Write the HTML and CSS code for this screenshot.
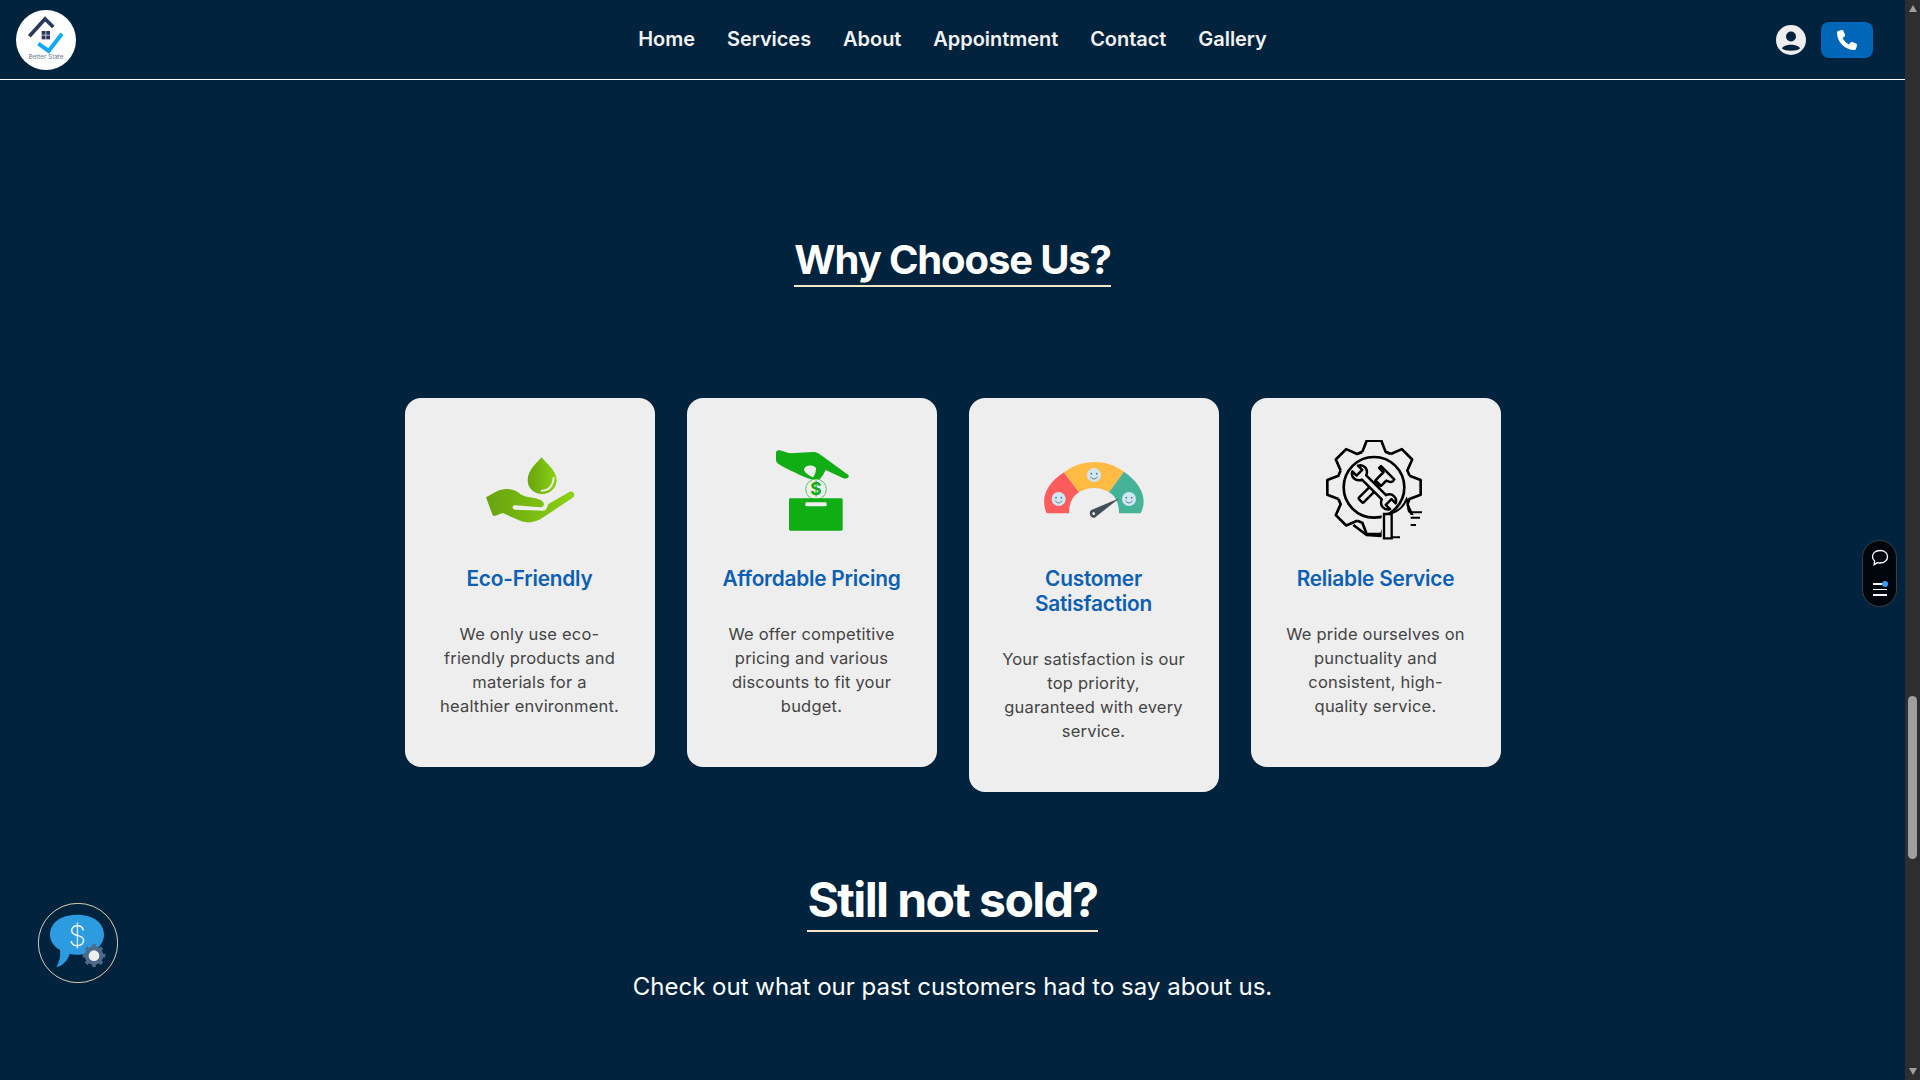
FILE: index.html
```html
<!DOCTYPE html>
<html lang="en">
<head>
<meta charset="utf-8">
<title>Better State</title>
<link rel="stylesheet" href="styles.css">
</head>
<body>
<div class="app">
  <div class="page">
    <header class="topbar">
      <a class="logo">
        <svg viewBox="48 29 180 180" width="60" height="60">
          <circle cx="138" cy="119" r="90" fill="#fff"/>
          <path d="M88 108 L135 56 L160 80" fill="none" stroke="#2a3a5c" stroke-width="11"/>
          <rect x="125" y="92" width="25" height="25" fill="#2a3a5c"/>
          <path d="M137.5 92V117M125 104.500H150" stroke="#fff" stroke-width="2"/>
          <path d="M115 130 L146 152 L186 100" fill="none" stroke="#12aaf2" stroke-width="12"/>
          <text x="138" y="176" text-anchor="middle" class="logo-text">Better State</text>
        </svg>
      </a>
      <nav class="nav">
        <a>Home</a><a>Services</a><a>About</a><a>Appointment</a><a>Contact</a><a>Gallery</a>
      </nav>
      <div class="actions">
        <svg viewBox="0 0 30 30" width="30" height="30">
          <circle cx="15" cy="15" r="15" fill="#eee"/>
          <circle cx="15" cy="11.500" r="5" fill="#01233e"/>
          <path d="M6 23.500 C8 18.500 22 18.500 24 23.500 C21 26.500 9 26.500 6 23.500Z" fill="#01233e"/>
        </svg>
        <button class="call">
          <svg viewBox="0 0 512 512" width="20" height="20"><path fill="#fff" d="M164.900 24.600c-7.700-18.600-28-28.500-47.400-23.200l-88 24C12.100 30.200 0 46 0 64C0 311.400 200.600 512 448 512c18 0 33.800-12.100 38.600-29.500l24-88c5.300-19.400-4.600-39.700-23.200-47.400l-96-40c-16.300-6.800-35.200-2.100-46.300 11.600L304.700 368C234.300 334.700 177.300 277.700 144 207.300L193.300 167c13.700-11.200 18.400-30 11.600-46.300l-40-96z"/></svg>
        </button>
      </div>
    </header>

    <main class="content">
      <h2 class="heading why">Why Choose Us?</h2>
      <section class="cards">
        <article class="card">
          <svg class="card-icon" viewBox="60 30 300 300">
            <defs><linearGradient id="eco" x1="0" x2="1" y1="0" y2="0"><stop offset="0" stop-color="#68a30f"/><stop offset="1" stop-color="#8bd213"/></linearGradient></defs>
            <path d="M245 82 C258 100 290 122 290 150 C290 175 270 192 247 192 C222 192 203 175 203 150 C203 122 232 96 245 82Z" fill="url(#eco)"/>
            <path d="M245 182 C265 182 278 170 281 144" fill="none" stroke="#eee" stroke-width="6" stroke-linecap="round"/>
            <path d="M78 202 L108 185 C130 173 160 175 178 190 C192 203 225 203 240 209 C255 215 256 232 240 232 L165 226 C155 226 155 238 166 239 L250 242 C258 242 262 232 265 222 L328 186 C340 180 348 195 338 203 L250 262 C225 280 195 282 170 268 L130 250 C118 248 105 264 98 256 Z" fill="url(#eco)"/>
          </svg>
          <h3>Eco-Friendly</h3>
          <p>We only use eco-<br>friendly products and<br>materials for a<br>healthier environment.</p>
        </article>
        <article class="card">
          <svg class="card-icon" viewBox="906 30 300 300">
            <path d="M948 66 C955 55 965 65 990 70 L1060 66 C1072 66 1082 74 1095 84 L1165 135 C1170 143 1160 147 1150 145 L1097 120 C1090 135 1080 148 1078 148 L1060 148 C1045 150 1000 125 965 108 C955 102 948 98 948 90Z" fill="#11ad14"/>
            <path d="M1032 118 C1034 105 1062 102 1068 115 C1068 128 1062 142 1058 142 C1050 138 1032 128 1032 118Z" fill="#eee"/>
            <circle cx="1068" cy="178" r="31" fill="#eee" stroke="#11ad14" stroke-width="2"/>
            <text x="1068" y="196" text-anchor="middle" class="dollar">$</text>
            <rect x="987" y="205" width="161" height="97" rx="4" fill="#11ad14"/>
            <rect x="1036" y="217" width="64" height="12" rx="4" fill="#eee"/>
          </svg>
          <h3>Affordable Pricing</h3>
          <p>We offer competitive<br>pricing and various<br>discounts to fit your<br>budget.</p>
        </article>
        <article class="card">
          <svg class="card-icon" viewBox="72 30 300 300">
            <path d="M80 250 C60 205 80 160 132 127 L177 187 C155 200 147 225 147 250Z" fill="#fd5c5c"/>
            <path d="M132 127 C185 86 260 86 312 125 L267 187 C240 170 205 170 177 187Z" fill="#ffbb44"/>
            <path d="M312 125 C362 160 385 205 362 250 L297 250 C297 225 290 200 267 187Z" fill="#46b298"/>
            <g fill="#cfe6f5"><circle cx="116" cy="207" r="21"/><circle cx="222" cy="135" r="21"/><circle cx="327" cy="207" r="21"/></g>
            <g fill="#5a6b72"><circle cx="108" cy="203" r="2.500"/><circle cx="124" cy="203" r="2.500"/><circle cx="214" cy="131" r="2.500"/><circle cx="230" cy="131" r="2.500"/><circle cx="319" cy="203" r="2.500"/><circle cx="335" cy="203" r="2.500"/></g>
            <g fill="none" stroke="#5a6b72" stroke-width="2.500"><path d="M106 212 C110 221 122 221 126 212M212 140 C216 149 228 149 232 140M317 212 C321 221 333 221 337 212"/></g>
            <path d="M298 205 L214 240 C205 246 210 266 224 263 Z" fill="#434f57"/>
            <circle cx="221" cy="251" r="4" fill="#fff"/>
          </svg>
          <h3>Customer<br>Satisfaction</h3>
          <p>Your satisfaction is our<br>top priority,<br>guaranteed with every<br>service.</p>
        </article>
        <article class="card">
          <svg class="card-icon" viewBox="918 30 300 300">
            <defs>
              <g id="tooth"><path d="M-35 -106.400 L-22 -140 L22 -140 L35 -106.400 A112 112 0 0 1 50.500 -100" fill="none" stroke="#000" stroke-width="8" stroke-linejoin="round"/></g>
            </defs>
            <g transform="translate(1062 172)">
              <use href="#tooth"/><use href="#tooth" transform="rotate(45)"/><use href="#tooth" transform="rotate(90)"/><use href="#tooth" transform="rotate(135)"/><use href="#tooth" transform="rotate(180)"/><use href="#tooth" transform="rotate(225)"/><use href="#tooth" transform="rotate(270)"/><use href="#tooth" transform="rotate(315)"/>
              <circle r="91" fill="none" stroke="#000" stroke-width="8"/>
              <g fill="#eee" stroke="#000" stroke-width="7.500" stroke-linejoin="round">
                <g transform="rotate(45)">
                  <rect x="-10" y="-15" width="20" height="72" rx="3"/>
                  <path d="M-12 -18 L-12 -52 L-30 -52 L-30 -60 L26 -60 C30 -50 26 -45 12 -40 L12 -18Z"/>
                </g>
                <g transform="rotate(-45)">
                  <path d="M-9 -42 L-9 42 C-28 50 -28 72 -12 80 L-12 62 L12 62 L12 80 C28 72 28 50 9 42 L9 -42 C28 -50 28 -72 12 -80 L12 -62 L-12 -62 L-12 -80 C-28 -72 -28 -50 -9 -42Z"/>
                </g>
              </g>
            </g>
            <path d="M1085 255 L1215 255 L1215 332 L1085 332Z" fill="#eee"/>
            <path d="M1000 285 L1040 315 L1085 318" fill="none" stroke="#000" stroke-width="8"/>
            <path d="M1092 252 H1115 V325 H1092Z" fill="#eee" stroke="#000" stroke-width="7"/>
            <path d="M1115 250 C1140 240 1150 230 1160 207 C1168 225 1160 242 1170 247 H1206M1115 322 H1140M1172 263 H1200M1172 285 H1188" fill="none" stroke="#000" stroke-width="6"/>
          </svg>
          <h3>Reliable Service</h3>
          <p>We pride ourselves on<br>punctuality and<br>consistent, high-<br>quality service.</p>
        </article>
      </section>
      <h2 class="heading sold">Still not sold?</h2>
      <p class="lead">Check out what our past customers had to say about us.</p>
    </main>

    <button class="offer">
      <svg viewBox="0 0 240 240" width="80" height="80">
        <circle cx="120" cy="120" r="119" fill="none" stroke="#d8cfae" stroke-width="3"/>
        <path d="M117 35 C170 35 198 62 198 95 C198 128 165 155 117 155 C110 155 102 154 95 153 C90 170 75 190 55 192 C65 175 68 160 66 141 C45 128 36 112 36 95 C36 62 65 35 117 35Z" fill="#2d9be0"/>
        <text x="118" y="129" text-anchor="middle" class="offer-dollar">$</text>
        <g transform="translate(168 158)">
          <circle r="28" fill="#4d6a88"/>
          <g stroke="#4d6a88" stroke-width="11"><path d="M0 -34V34M-34 0H34M-24 -24L24 24M-24 24L24 -24"/></g>
          <circle r="16" fill="#eee"/>
        </g>
      </svg>
    </button>

    <aside class="dock">
      <svg viewBox="0 0 24 24" width="20" height="20"><path d="M12 3 C18 3 21 6.500 21 10.500 C21 15 17 18 12 18 C11 18 10 18 9 17.500 L5 20 L5.500 15.500 C3.500 14 3 12 3 10.500 C3 6.500 6 3 12 3Z" fill="none" stroke="#fff" stroke-width="1.600"/></svg>
      <div class="dock-lines"><i class="short"></i><i></i><i></i><b></b></div>
    </aside>
  </div>

  <div class="scrollbar">
    <span class="arrow up"></span>
    <div class="track"><div class="thumb"></div></div>
    <span class="arrow down"></span>
  </div>
</div>
</body>
</html>
```

FILE: styles.css
```css
* { box-sizing: border-box; }
html, body { margin: 0; height: 100%; overflow: hidden; }
body { background: #01233e; color: #fff; font-family: "Inter", "Open Sans", sans-serif; }

.app { display: flex; height: 1080px; }
.page { position: relative; flex: 1; min-width: 0; }

.topbar {
  height: 80px;
  border-bottom: 1px solid #fff;
  display: grid;
  grid-template-columns: 1fr auto 1fr;
  align-items: center;
  padding: 0 16px;
}
.logo { display: flex; }
.logo-text { font-size: 19px; fill: #6f7a8c; font-family: "Inter", sans-serif; }
.nav { display: flex; gap: 32px; font-size: 20px; font-weight: 600; color: #f2f2f2; padding-bottom: 2px; letter-spacing: -0.05px; }
.actions { display: flex; justify-content: flex-end; align-items: center; gap: 15px; padding-right: 16px; }
.call {
  width: 52px; height: 36px; border: 0; border-radius: 8px; background: #0066b8;
  display: flex; align-items: center; justify-content: center; padding: 0;
}

.content { display: flex; flex-direction: column; align-items: center; padding-top: 155px; }
.heading { margin: 0; font-weight: 700; color: #fff; border-bottom: 2px solid #f3e7c8; display: block; white-space: nowrap; }
.why { font-size: 40px; line-height: 50px; letter-spacing: -1.150px; margin-bottom: 111px; }
.sold { font-size: 48px; line-height: 60px; letter-spacing: -1.6px; margin-top: 78px; }
.lead { margin: 37px 0 0; font-size: 24px; line-height: 36px; font-weight: 400; letter-spacing: 0; }

.cards { display: flex; align-items: flex-start; gap: 32px; }
.card {
  width: 250px; background: #eee; border-radius: 16px;
  padding: 42px 16px 49px; text-align: center; display: flex; flex-direction: column; align-items: center;
}
.card-icon { width: 100px; height: 100px; display: block; }
.card h3 { margin: 26px 0 0; font-size: 20.800px; line-height: 25px; font-weight: 600; color: #0c5fb3; letter-spacing: -0.2px; }
.card p { margin: 30.500px 0 0; font-size: 16.500px; line-height: 24px; color: #444; letter-spacing: 0.2px; }
.dollar { font-size: 52px; font-weight: 700; fill: #11ad14; font-family: "Inter", sans-serif; }
.offer-dollar { font-size: 84px; font-weight: 200; fill: #fff; font-family: "Inter", sans-serif; }

.offer { position: absolute; left: 38px; top: 903px; width: 80px; height: 80px; padding: 0; border: 0; background: none; display: block; }
.dock {
  position: absolute; left: 1862px; top: 540px; width: 35px; height: 67px;
  background: #01060d; border: 1.500px solid #3c3f44; border-radius: 18px;
  display: flex; flex-direction: column; align-items: center; padding-top: 7px; gap: 15px;
}
.dock-lines { position: relative; width: 14px; display: flex; flex-direction: column; gap: 4px; }
.dock-lines i { display: block; height: 1.500px; background: #fff; }
.dock-lines i.short { width: 9px; }
.dock-lines b { position: absolute; right: -1px; top: -2px; width: 6px; height: 6px; border-radius: 50%; background: #3d9bff; }

.scrollbar { width: 15px; background: #2e2e2e; display: flex; flex-direction: column; align-items: center; padding: 5px 0; }
.track { flex: 1; width: 100%; padding: 684px 3px 0; }
.thumb { width: 9px; height: 163px; border-radius: 5px; background: #9f9f9f; }
.arrow { width: 0; height: 0; border-left: 4.500px solid transparent; border-right: 4.500px solid transparent; }
.up { border-bottom: 7px solid #9f9f9f; }
.down { border-top: 7px solid #9f9f9f; }
```
